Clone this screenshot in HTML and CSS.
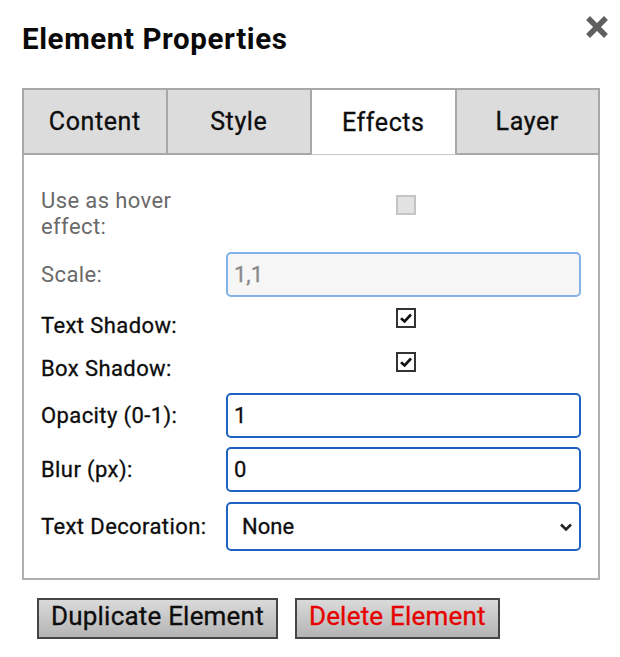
FILE: index.html
```html
<!DOCTYPE html>
<html>
<head>
<meta charset="utf-8">
<link rel="stylesheet" href="styles.css">
</head>
<body>
<div class="dialog">
  <div class="header">
    <h1 class="title">Element Properties</h1>
    <button class="close" aria-label="Close">
      <svg width="22" height="22" viewBox="0 0 22 22"><path d="M4 4 L18 18 M18 4 L4 18" stroke="#5f5f5f" stroke-width="5.5" stroke-linecap="square"/></svg>
    </button>
  </div>
  <div class="tabs">
    <div class="tab">Content</div>
    <div class="tab">Style</div>
    <div class="tab active">Effects</div>
    <div class="tab">Layer</div>
  </div>
  <div class="panel">
    <div class="row row-hover">
      <label class="label disabled">Use as hover<br>effect:</label>
      <div class="field center"><span class="cb cb-disabled"></span></div>
    </div>
    <div class="row row-scale">
      <label class="label disabled">Scale:</label>
      <div class="field"><div class="input input-disabled">1,1</div></div>
    </div>
    <div class="row row-ts">
      <label class="label">Text Shadow:</label>
      <div class="field center top"><span class="cb cb-checked"><svg width="16" height="16" viewBox="0 0 16 16"><path d="M3 8.2 L6.6 11.5 L13 4.5" fill="none" stroke="#111" stroke-width="2.6"/></svg></span></div>
    </div>
    <div class="row row-bs">
      <label class="label">Box Shadow:</label>
      <div class="field center top"><span class="cb cb-checked"><svg width="16" height="16" viewBox="0 0 16 16"><path d="M3 8.2 L6.6 11.5 L13 4.5" fill="none" stroke="#111" stroke-width="2.6"/></svg></span></div>
    </div>
    <div class="row row-op">
      <label class="label">Opacity (0-1):</label>
      <div class="field"><div class="input">1</div></div>
    </div>
    <div class="row row-blur">
      <label class="label">Blur (px):</label>
      <div class="field"><div class="input">0</div></div>
    </div>
    <div class="row row-sel">
      <label class="label">Text Decoration:</label>
      <div class="field"><div class="input select"><span>None</span><svg width="14" height="10" viewBox="0 0 14 10"><path d="M2 2.5 L7 7.5 L12 2.5" fill="none" stroke="#222" stroke-width="2.6"/></svg></div></div>
    </div>
  </div>
  <div class="actions">
    <button class="btn">Duplicate Element</button>
    <button class="btn btn-danger">Delete Element</button>
  </div>
</div>
</body>
</html>
```

FILE: styles.css
```css
* { box-sizing: border-box; }
html, body { margin: 0; padding: 0; background: #fff; }
body { font-family: Roboto, "Liberation Sans", sans-serif; color: #111; }

.dialog { padding: 0 20px 0 22px; width: 620px; }

.header { display: flex; justify-content: space-between; align-items: flex-start; height: 88px; }
.title { margin: 22px 0 0 0; font-size: 29.5px; font-weight: 700; line-height: 34px; letter-spacing: 0.6px; color: #0a0a0a; }
.close { border: 0; background: none; padding: 0; margin: 16px -8px 0 0; width: 22px; height: 22px; cursor: pointer; }
.close svg { display: block; }

.tabs { display: grid; grid-template-columns: repeat(4, 1fr); width: 578px; }
.tab { height: 67px; display: flex; align-items: center; justify-content: center; font-size: 25px; letter-spacing: 0.6px; background: #dcdcdc; border: 2px solid #a8a8a8; border-right-width: 1px; border-left-width: 1px; color: #0d0d0d; -webkit-text-stroke: 0.3px #0d0d0d; }
.tab:first-child { border-left-width: 2px; }
.tab:last-child { border-right-width: 2px; }
.tab.active { background: #fff; border-bottom-color: #c8c8c8; border-bottom-width: 1px; }

.panel { width: 578px; border: 2px solid #b0b0b0; border-top: none; padding: 33px 17px 27px 17px; display: flex; flex-direction: column; }
.row { display: grid; grid-template-columns: 185px 1fr; }
.label { font-size: 22px; line-height: 26px; letter-spacing: 0.4px; color: #0d0d0d; align-self: center; -webkit-text-stroke: 0.3px #0d0d0d; }
.label.disabled { color: #6a6a6a; -webkit-text-stroke: 0; }
.field { display: flex; }
.field.center { justify-content: center; }

.row-hover { height: 52px; margin-bottom: 12px; }
.row-hover .label { align-self: start; }
.row-hover .field { padding-top: 7px; align-items: flex-start; }
.row-scale { margin-bottom: 9px; }
.row-ts { height: 40px; margin-bottom: 4px; }
.row-bs { height: 38px; margin-bottom: 5px; }
.row-ts .field, .row-bs .field { padding-top: 2px; align-items: flex-start; }
.row-op { margin-bottom: 9px; }
.row-blur { margin-bottom: 10px; }

.cb { width: 20px; height: 20px; display: inline-flex; align-items: center; justify-content: center; margin-left: 4px; }
.cb-disabled { background: #e2e2e2; border: 2px solid #c4c4c4; }
.cb-checked { background: #fff; border: 2px solid #333; }
.cb svg { display: block; }

.input { width: 100%; height: 45px; border: 2px solid #1f63c2; border-radius: 5px; padding: 0 6px; font-size: 22px; display: flex; align-items: center; color: #0d0d0d; background: #fff; -webkit-text-stroke: 0.3px #0d0d0d; }
.input-disabled { border-color: #83b2e6; background: #f6f6f6; color: #888; -webkit-text-stroke: 0.3px #888; }
.select { height: 49px; justify-content: space-between; padding: 0 6px 0 14px; }
.select svg { display: block; }

.actions { display: flex; gap: 17px; padding: 18px 0 0 15px; }
.btn { font-family: Roboto, "Liberation Sans", sans-serif; font-size: 26px; height: 41px; padding: 0 12px 5px; border: 2px solid #454545; background: linear-gradient(#dadada, #b4b4b4); color: #0d0d0d; letter-spacing: 0.2px; line-height: 30px; -webkit-text-stroke: 0.3px #0d0d0d; }
.btn-danger { color: #e60000; -webkit-text-stroke: 0.3px #e60000; }
```
